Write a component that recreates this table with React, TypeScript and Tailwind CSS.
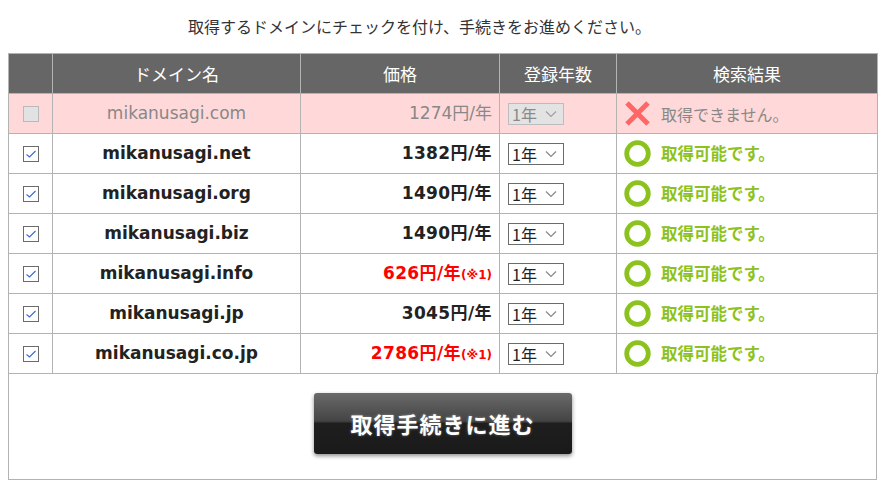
const FONT = { fontFamily: '"DejaVu Sans", "Noto Sans CJK JP", sans-serif' };

type Row = {
  domain: string;
  price: string;
  promo?: boolean;
  available: boolean;
};

const ROWS: Row[] = [
  { domain: "mikanusagi.com", price: "1274", available: false },
  { domain: "mikanusagi.net", price: "1382", available: true },
  { domain: "mikanusagi.org", price: "1490", available: true },
  { domain: "mikanusagi.biz", price: "1490", available: true },
  { domain: "mikanusagi.info", price: "626", promo: true, available: true },
  { domain: "mikanusagi.jp", price: "3045", available: true },
  { domain: "mikanusagi.co.jp", price: "2786", promo: true, available: true },
];

function CheckBox({ disabled }: { disabled?: boolean }) {
  if (disabled) {
    return <div className="mx-auto h-[16px] w-[16px] border border-[#b9b9b9] bg-[#e2e2e2]" />;
  }
  return (
    <div className="mx-auto flex h-[16px] w-[16px] items-center justify-center border border-[#6b6b6b] bg-white">
      <svg width="12" height="10" viewBox="0 0 12 10">
        <path d="M1.5 5.5 L4.5 8 L10.5 2" fill="none" stroke="#3b6fd1" strokeWidth="1.2" />
      </svg>
    </div>
  );
}

function YearSelect({ disabled }: { disabled?: boolean }) {
  return (
    <div
      className={
        "flex h-[22px] w-[56px] items-center justify-between border pl-[3px] pr-[6px] text-[16px] " +
        (disabled ? "border-[#bdbdbd] bg-[#e3e3e3] text-[#8a8a8a]" : "border-[#6b6b6b] bg-white text-[#222]")
      }
      style={{ fontFamily: '"Noto Sans CJK JP", sans-serif' }}
    >
      <span className="leading-none">1年</span>
      <svg width="12" height="8" viewBox="0 0 12 8">
        <path d="M1 1.5 L6 6.5 L11 1.5" fill="none" stroke={disabled ? "#a0a0a0" : "#888"} strokeWidth="1.2" />
      </svg>
    </div>
  );
}

function OkIcon() {
  return (
    <svg width="27" height="27" viewBox="0 0 27 27">
      <circle cx="13.5" cy="13.5" r="10.8" fill="none" stroke="#8cc21f" strokeWidth="4.8" />
    </svg>
  );
}

function NgIcon() {
  return (
    <svg width="27" height="27" viewBox="0 0 27 27">
      <path d="M3 3 L24 24 M24 3 L3 24" stroke="#ff6767" strokeWidth="5" />
    </svg>
  );
}

export default function App() {
  return (
    <div className="w-[883px] bg-white px-[8px]" style={FONT}>
      <div
        className="flex h-[53px] items-center justify-center pb-[1px] pr-[44px] text-[16px] text-[#333]"
        style={{ fontFamily: '"Noto Sans CJK JP", sans-serif' }}
      >
        取得するドメインにチェックを付け、手続きをお進めください。
      </div>

      <table className="w-[869px] table-fixed border-collapse">
        <colgroup>
          <col className="w-[44px]" />
          <col className="w-[248px]" />
          <col className="w-[199px]" />
          <col className="w-[117px]" />
          <col className="w-[261px]" />
        </colgroup>
        <thead>
          <tr className="bg-[#666666] text-[17px] font-normal text-white" style={{ fontFamily: '"Noto Sans CJK JP", sans-serif' }}>
            <th className="h-[40px] border border-[#b3b3b3]" />
            <th className="border border-[#b3b3b3] font-normal">ドメイン名</th>
            <th className="border border-[#b3b3b3] font-normal">価格</th>
            <th className="border border-[#b3b3b3] font-normal">登録年数</th>
            <th className="border border-[#b3b3b3] font-normal">検索結果</th>
          </tr>
        </thead>
        <tbody>
          {ROWS.map((r) => {
            const off = !r.available;
            return (
              <tr key={r.domain} className={off ? "bg-[#ffd9d9]" : "bg-white"}>
                <td className="h-[40px] border border-[#b3b3b3]">
                  <CheckBox disabled={off} />
                </td>
                <td
                  className={
                    "border border-[#b3b3b3] text-center text-[17px] " +
                    (off ? "font-normal text-[#888]" : "font-bold text-[#222]")
                  }
                >
                  {r.domain}
                </td>
                <td
                  className={
                    "border border-[#b3b3b3] pr-[7px] text-right text-[17px] whitespace-nowrap " +
                    (off ? "font-normal text-[#888]" : r.promo ? "font-bold tracking-[0.4px] text-[#ff0000]" : "font-bold tracking-[0.4px] text-[#222]")
                  }
                >
                  {r.price}円/年
                  {r.promo && <span className="text-[12px] tracking-normal">(※1)</span>}
                </td>
                <td className="border border-[#b3b3b3] pl-[8px]">
                  <YearSelect disabled={off} />
                </td>
                <td className="border border-[#b3b3b3] pl-[7px]">
                  <div className="flex items-center gap-[10px]" style={{ fontFamily: '"Noto Sans CJK JP", sans-serif' }}>
                    {off ? <NgIcon /> : <OkIcon />}
                    {off ? (
                      <span className="text-[16px] text-[#888]">取得できません。</span>
                    ) : (
                      <span className="text-[16.5px] font-bold text-[#8cc21f]">取得可能です。</span>
                    )}
                  </div>
                </td>
              </tr>
            );
          })}
        </tbody>
      </table>

      <div className="flex h-[106px] w-[869px] justify-center border border-t-0 border-[#b3b3b3] pt-[19px]">
        <button
          className="h-[61px] w-[258px] rounded-[3px] text-[22px] font-bold tracking-[1px] text-white shadow-[0_2px_4px_rgba(0,0,0,0.45)]"
          style={{
            fontFamily: '"Noto Sans CJK JP", sans-serif',
            background: "linear-gradient(to bottom, #6a6a6a 0%, #444 46%, #1e1e1e 50%, #1a1a1a 100%)",
            textShadow: "0 0 3px rgba(255,255,255,0.35)",
          }}
        >
          取得手続きに進む
        </button>
      </div>
    </div>
  );
}
